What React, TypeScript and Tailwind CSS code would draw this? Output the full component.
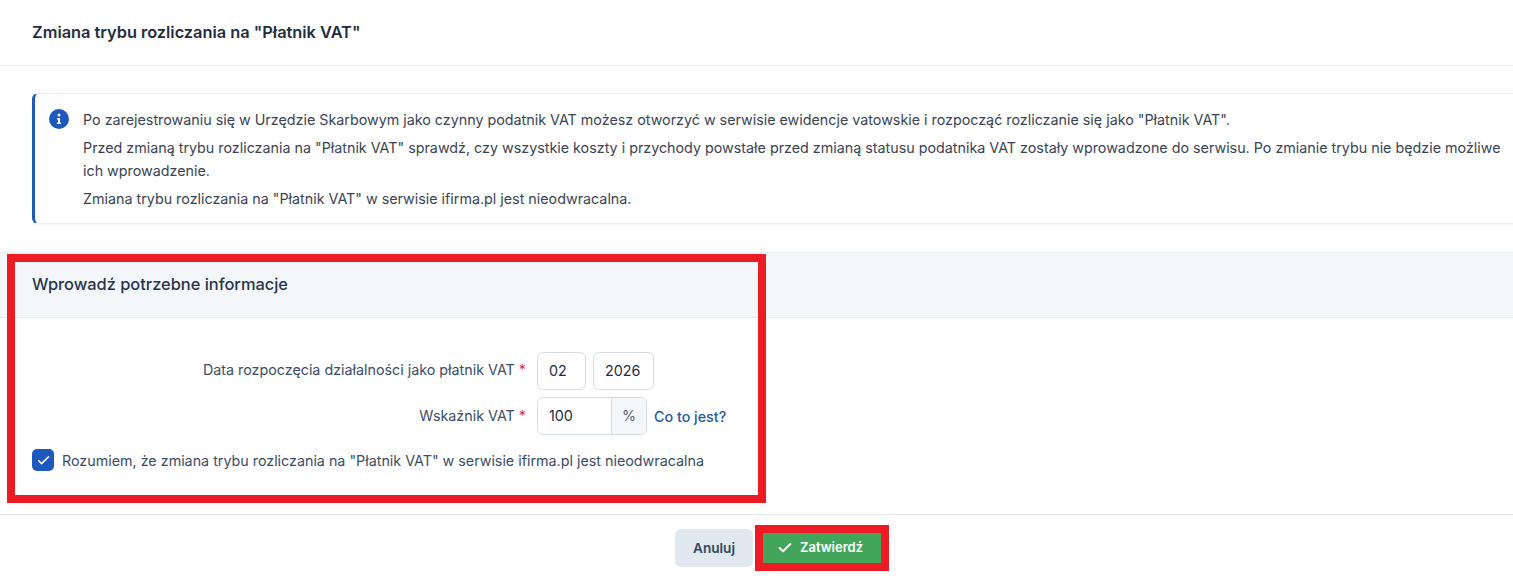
import { Check } from 'lucide-react';

export default function App() {
  return (
    <div className="relative h-[581px] w-[1513px] overflow-hidden bg-white text-[14.3px] text-[#3b4d68] font-['Inter',sans-serif]">
      <header className="flex h-[66px] items-center border-b border-[#e8ebef] px-8">
        <h1 className="text-[16.35px] font-semibold text-[#1f2d42]">Zmiana trybu rozliczania na "Płatnik VAT"</h1>
      </header>

      <div className="px-8 pt-[27px]">
        <div className="flex h-[131px] w-[1510px] gap-[14px] rounded-md border border-l-[3px] border-[#eceef1] border-l-[#1f5bb5] pl-[14px] pr-[20px] pt-[14px] shadow-[0_1px_2px_rgba(0,0,0,0.04)]">
          <svg width="20" height="20" viewBox="0 0 20 20" className="mt-[1px] shrink-0">
            <circle cx="10" cy="10" r="10" fill="#1c58bd" />
            <circle cx="10" cy="6" r="1.5" fill="white" />
            <path d="M8 9h3v4.6h1.1V15H7.9v-1.4H9v-3.2H8z" fill="white" />
          </svg>
          <div className="w-[1422px] text-[#3a4454]">
            <p className="leading-[23px]">Po zarejestrowaniu się w Urzędzie Skarbowym jako czynny podatnik VAT możesz otworzyć w serwisie ewidencje vatowskie i rozpocząć rozliczanie się jako "Płatnik VAT".</p>
            <p className="mt-[5px] leading-[23px]">Przed zmianą trybu rozliczania na "Płatnik VAT" sprawdź, czy wszystkie koszty i przychody powstałe przed zmianą statusu podatnika VAT zostały wprowadzone do serwisu. Po zmianie trybu nie będzie możliwe ich wprowadzenie.</p>
            <p className="mt-[5px] leading-[23px]">Zmiana trybu rozliczania na "Płatnik VAT" w serwisie ifirma.pl jest nieodwracalna.</p>
          </div>
        </div>
      </div>

      <section className="mt-[28px] flex h-[66px] items-center border-y border-[#e8ebef] bg-[#f4f7fa] px-8 pb-[2px]">
        <h2 className="text-[16.4px] font-medium text-[#26354d]">Wprowadź potrzebne informacje</h2>
      </section>

      <div className="px-8 pt-[34px]">
        <div className="flex h-[38px] items-center">
          <label className="w-[494px] pb-[2px] text-right">
            Data rozpoczęcia działalności jako płatnik VAT <span className="text-[#d9363e]">*</span>
          </label>
          <input readOnly value="02" className="ml-[11px] h-[38px] w-[49px] rounded-md border border-[#d5dbe2] px-[11px] pb-[1px] text-[#1f2d42] outline-none" />
          <input readOnly value="2026" className="ml-[7px] h-[38px] w-[61px] rounded-md border border-[#d5dbe2] px-[11px] pb-[1px] text-[#1f2d42] outline-none" />
        </div>
        <div className="mt-[7px] flex h-[38px] items-center">
          <label className="w-[494px] pb-[1px] text-right">
            Wskaźnik VAT <span className="text-[#d9363e]">*</span>
          </label>
          <div className="ml-[11px] flex h-[38px] w-[110px] overflow-hidden rounded-md border border-[#d5dbe2]">
            <input readOnly value="100" className="w-[73px] px-[11px] pb-[1px] text-[#1f2d42] outline-none" />
            <span className="flex flex-1 items-center justify-center border-l border-[#d5dbe2] bg-[#f4f7fa] pb-[1px] text-[#56657a]">%</span>
          </div>
          <a className="ml-[7px] pt-[1px] font-medium text-[#24599f]">Co to jest?</a>
        </div>
        <label className="mt-[14px] flex items-center gap-[8px]">
          <span className="flex h-[22px] w-[22px] items-center justify-center rounded-[5px] bg-[#1c58bd]">
            <Check size={15} className="text-white" strokeWidth={2.5} />
          </span>
          <span className="pt-[1px]">Rozumiem, że zmiana trybu rozliczania na "Płatnik VAT" w serwisie ifirma.pl jest nieodwracalna</span>
        </label>
      </div>

      <footer className="absolute inset-x-0 top-[514px] flex h-[67px] items-center justify-center border-t border-[#e8ebef] pl-[51px]">
        <div className="flex items-center gap-[2px]">
          <button className="h-[38px] w-[78px] rounded-md bg-[#e2e8f0] text-[13.6px] font-semibold text-[#33475f]">Anuluj</button>
          <span className="border-[8px] border-[#ed1c24]">
            <button className="flex h-[30px] w-[118px] items-center justify-center gap-[7px] bg-[#43a55a] pr-[4px] text-[13px] font-semibold text-white">
              <Check size={16} strokeWidth={3} />
              Zatwierdź
            </button>
          </span>
        </div>
      </footer>

      <div className="pointer-events-none absolute left-[7px] top-[254px] h-[249px] w-[759px] border-[8px] border-[#ed1c24]" />
    </div>
  );
}
